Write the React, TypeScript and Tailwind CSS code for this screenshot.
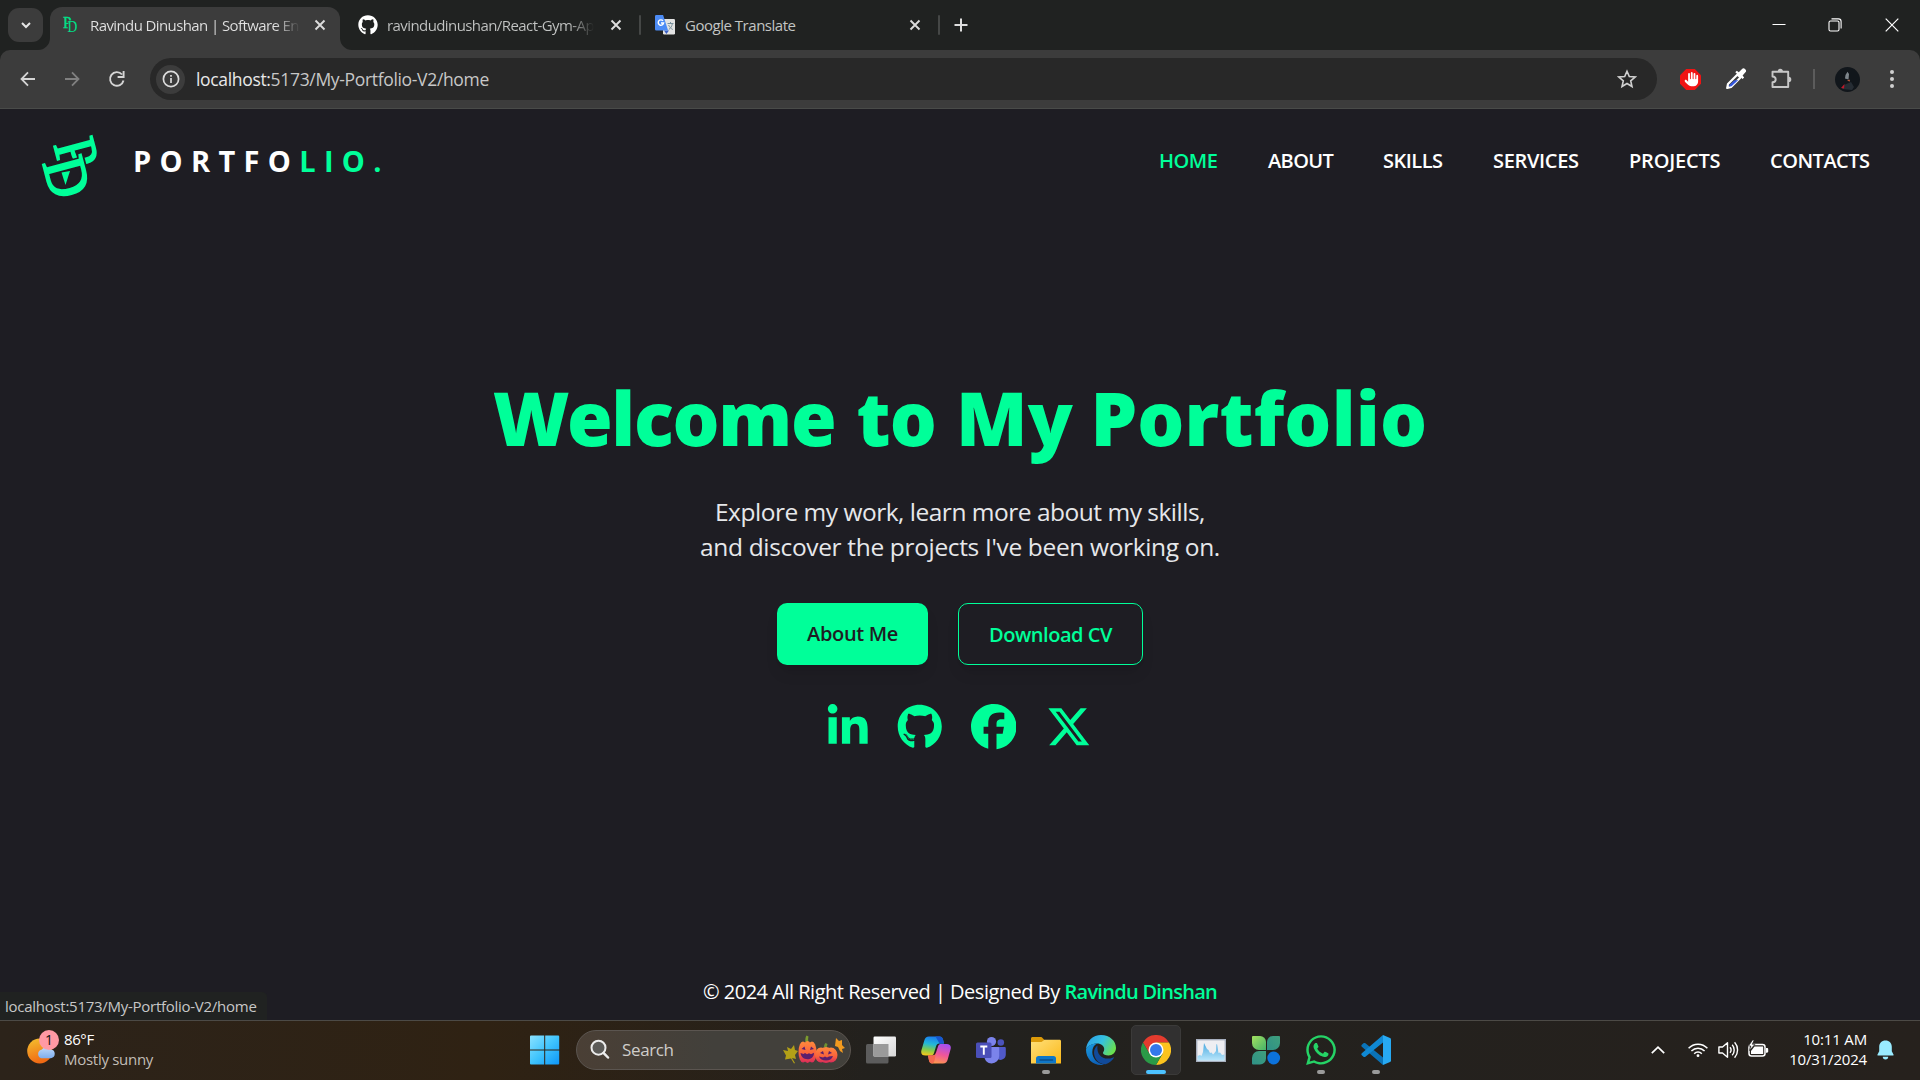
import React from "react";
import { FaGithub, FaLinkedinIn, FaFacebook, FaXTwitter, FaWhatsapp, FaHand } from "react-icons/fa6";

const GREEN = "#00ff99";

/* ---------- shared glyphs ---------- */

function CloseGlyph() {
  return (
    <svg width="12" height="12" viewBox="0 0 12 12" className="shrink-0">
      <path d="M1.5 1.5l9 9M10.5 1.5l-9 9" stroke="#dcdcdc" strokeWidth="1.9" fill="none" />
    </svg>
  );
}

function PdFavicon() {
  return (
    <svg width="18" height="18" viewBox="0 0 18 18" className="shrink-0 overflow-visible">
      <g fill="#00e08a" fontFamily="Liberation Serif, serif" fontSize="17">
        <text transform="translate(0 12) scale(0.9 1)" stroke="#00e08a" strokeWidth="0.4">P</text>
        <text transform="translate(4.6 16) scale(0.8 1)" stroke="#3c3c3c" strokeWidth="1" paintOrder="stroke">D</text>
      </g>
    </svg>
  );
}

function TranslateIcon() {
  return (
    <svg width="20" height="20" viewBox="0 0 20 20" className="shrink-0">
      <rect x="8" y="4" width="12" height="15.5" rx="1.2" fill="#e3e3e3" />
      <path d="M12.5 8.5h6M15.5 7v1.5M17.4 8.5c-.5 3-2 5-3.600 6M13.6 10c1 2.300 2.300 3.500 4.200 4.500" stroke="#78909c" strokeWidth="1" fill="none" />
      <path d="M9 15.500h5l-2.600 3.600z" fill="#3b5fc4" />
      <path d="M1.300 0h6.800l5 15.500H1.300A1.300 1.300 0 0 1 0 14.200V1.300A1.300 1.300 0 0 1 1.300 0z" fill="#4c8bf5" />
      <path d="M8 5.800A2.700 2.700 0 1 0 8.600 8H6" stroke="#fff" strokeWidth="1.400" fill="none" />
    </svg>
  );
}

function LogoMark() {
  return (
    <svg width="100" height="90" viewBox="0 0 100 90" className="block overflow-visible">
      <g fill={GREEN} fontFamily="Liberation Serif, serif" fontSize="60">
        <text transform="translate(23.500 23.500) rotate(75) scale(0.860 1)" stroke={GREEN} strokeWidth="1.700">P</text>
        <text transform="translate(12.500 42) rotate(75) scale(0.920 1)" stroke="#1e1d23" strokeWidth="5.500" paintOrder="stroke">D</text>
        <text transform="translate(12.500 42) rotate(75) scale(0.920 1)" stroke={GREEN} strokeWidth="1.900">D</text>
        <path d="M31.500 51.500l8.500-1.500-4.500 14z" />
      </g>
    </svg>
  );
}

/* ---------- browser chrome ---------- */

function TabStrip() {
  return (
    <div className="flex h-[50px] items-stretch">
      <div className="flex w-[50px] items-center pl-2">
        <div className="flex h-[34px] w-[35px] items-center justify-center rounded-[11px] bg-[#3c3c3c]">
          <svg width="12" height="12" viewBox="0 0 12 12">
            <path d="M2 4l4 4 4-4" stroke="#e6e6e6" strokeWidth="2" fill="none" />
          </svg>
        </div>
      </div>

      <div className="relative mt-[7px] flex w-[290px] items-center rounded-t-[12px] bg-[#3c3c3c] pl-[13px] pb-[7px]">
        <svg width="12" height="12" viewBox="0 0 12 12" className="absolute bottom-0 -left-3">
          <path d="M12 0v12H0A12 12 0 0 0 12 0z" fill="#3c3c3c" />
        </svg>
        <svg width="12" height="12" viewBox="0 0 12 12" className="absolute -right-3 bottom-0">
          <path d="M0 0v12h12A12 12 0 0 1 0 0z" fill="#3c3c3c" />
        </svg>
        <PdFavicon />
        <div className="ml-[9px] w-[210px] overflow-hidden bg-linear-to-r from-[#e3e3e3] from-88% to-[#55555500] bg-clip-text text-[15px] tracking-[-0.6px] whitespace-nowrap text-transparent">
          Ravindu Dinushan | Software En
        </div>
        <div className="ml-[14px] flex"><CloseGlyph /></div>
      </div>

      <div className="flex w-[301px] items-center pl-[18px]">
        <FaGithub size={20} color="#ffffff" className="shrink-0" />
        <div className="ml-[9px] w-[209px] overflow-hidden bg-linear-to-r from-[#c3c5c4] from-88% to-[#20222100] bg-clip-text text-[15px] tracking-[-0.580px] whitespace-nowrap text-transparent">
          ravindudinushan/React-Gym-Ap
        </div>
        <div className="ml-[16px] flex"><CloseGlyph /></div>
        <div className="ml-[17px] h-5 w-[2px] shrink-0 rounded bg-[#454746]" />
      </div>

      <div className="flex w-[300px] items-center pl-[14px]">
        <TranslateIcon />
        <div className="ml-[10px] w-[224px] text-[15px] tracking-[-0.480px] text-[#c3c5c4]">Google Translate</div>
        <div className="flex"><CloseGlyph /></div>
        <div className="ml-[17px] h-5 w-[2px] shrink-0 rounded bg-[#454746]" />
      </div>

      <div className="flex flex-1 items-center pl-[13px]">
        <svg width="14" height="14" viewBox="0 0 14 14">
          <path d="M7 .5v13M.5 7h13" stroke="#dedede" strokeWidth="2" />
        </svg>
      </div>

      <div className="flex items-center gap-[43px] pr-[21px]">
        <svg width="14" height="14" viewBox="0 0 14 14" className="-mr-px">
          <path d="M.5 6.500h13" stroke="#fff" strokeWidth="1" />
        </svg>
        <svg width="14" height="14" viewBox="0 0 14 14" fill="none" stroke="#fff" strokeWidth="1.100">
          <rect x="1" y="3" width="10" height="10" rx="1.500" />
          <path d="M3.500 .900h7a2.600 2.600 0 0 1 2.600 2.600v7" />
        </svg>
        <svg width="14" height="14" viewBox="0 0 14 14">
          <path d="M.700 .700l12.600 12.600M13.300 .700L.700 13.300" stroke="#fff" strokeWidth="1.200" />
        </svg>
      </div>
    </div>
  );
}

function Toolbar() {
  return (
    <div className="flex h-[59px] items-center rounded-t-[10px] border-b border-[#494b49] bg-[#3c3c3c]">
      <div className="flex w-[150px] items-center pl-[20px]">
        <svg width="16" height="16" viewBox="0 0 16 16" fill="none" stroke="#d5d5d5" strokeWidth="1.800">
          <path d="M15 8H2M8 1.300L1.500 8 8 14.700" />
        </svg>
        <svg width="16" height="16" viewBox="0 0 16 16" fill="none" stroke="#808080" strokeWidth="1.800" className="ml-[28px]">
          <path d="M1 8h13M8 1.300L14.500 8 8 14.700" />
        </svg>
        <svg width="18" height="18" viewBox="0 0 18 18" fill="none" stroke="#d5d5d5" strokeWidth="1.900" className="ml-[28px]">
          <path d="M15.500 10.500A6.800 6.800 0 1 1 14 4.500M15.600 1v6H9.600" />
        </svg>
      </div>

      <div className="flex h-[42px] flex-1 items-center rounded-full bg-[#282828] pr-5 pl-[6px]">
        <div className="flex h-[29px] w-[29px] items-center justify-center rounded-full bg-[#3c3c3c]">
          <svg width="18" height="18" viewBox="0 0 18 18" fill="none" stroke="#dcdcdc">
            <circle cx="9" cy="9" r="7.600" strokeWidth="1.700" />
            <path d="M9 8v5M9 4.900v1.800" strokeWidth="1.700" />
          </svg>
        </div>
        <div className="ml-[11px] flex-1 pt-px text-[17.5px] tracking-[-0.330px] text-[#c7c7c7]">
          <span className="text-[#e8e8e8]">localhost:</span>5173/My-Portfolio-V2/home
        </div>
        <svg width="20" height="20" viewBox="0 0 20 20" fill="none" stroke="#d0d0d0" strokeWidth="1.600">
          <path d="M10 2.200l2.300 5.300 5.800.500-4.400 3.800 1.300 5.700L10 14.500l-5 3 1.300-5.700L1.900 8l5.800-.500z" />
        </svg>
      </div>

      <div className="flex w-[263px] items-center pl-[23px]">
        <svg width="21" height="21" viewBox="0 0 21 21">
          <path d="M6.200 0h8.600L21 6.200v8.600L14.800 21H6.200L0 14.800V6.200z" fill="#f01414" />
          <FaHand x={4.5} y={3} size={14.5} color="#fff" />
        </svg>
        <svg width="22" height="22" viewBox="0 0 22 22" className="ml-[24px]">
          <path d="M12.500 6.500l3 3L6 19l-3.800 1L3 16z" fill="#3c3c3c" stroke="#fff" strokeWidth="2.200" strokeLinejoin="round" />
          <path d="M9 12.500l4.300-.5L6.500 18.300l-2.500.3.400-1.700z" fill="#3457e0" />
          <path d="M10.300 4.300l1.500-1.500 2 1.400 3-3a2.300 2.300 0 0 1 3.400 0 2.300 2.300 0 0 1 0 3.400l-2.600 2.800 1.500 2.100-1.500 1.500z" fill="#fff" />
        </svg>
        <svg width="22" height="22" viewBox="0 0 22 22" className="ml-[23px]">
          <path d="M2.500 3.700h15.700v15.300H2.500v-4.700c2.300-.2 3.200-1.300 3.200-2.900s-.9-2.700-3.200-2.900z" fill="none" stroke="#c7c7c7" strokeWidth="1.900" strokeLinejoin="round" />
          <path d="M7.700 3.300a2.600 2.600 0 0 1 5.200 0zM18.700 8.800a2.600 2.600 0 0 1 0 5.200z" fill="#c7c7c7" />
        </svg>
        <div className="ml-[21px] h-5 w-[2px] bg-[#5c5c5c]" />
        <svg width="25" height="25" viewBox="0 0 25 25" className="ml-[20px]">
          <circle cx="12.500" cy="12.500" r="12.500" fill="#11161b" />
          <path d="M10.500 8l2-3.300L14 7l-.500 5.500-3.500-1z" fill="#7e868c" />
          <path d="M12 13l3-.300-.500 2z" fill="#c05a3a" />
          <path d="M7 22l2-4 7-3 3 5-2 3z" fill="#262d34" />
          <path d="M6 21l3.500-4-.500 4.500z" fill="#c0182a" />
        </svg>
        <svg width="4" height="20" viewBox="0 0 4 20" fill="#cfcfcf" className="ml-[30px]">
          <circle cx="2" cy="3" r="2" />
          <circle cx="2" cy="10" r="2" />
          <circle cx="2" cy="17" r="2" />
        </svg>
      </div>
    </div>
  );
}

/* ---------- portfolio page ---------- */

function SiteHeader() {
  return (
    <header className="flex h-[103px] items-center text-white">
      <div className="mt-[11px] h-[90px] w-[104px] pl-[30px]">
        <LogoMark />
      </div>
      <div className="ml-[29px] text-[29px] leading-none font-bold tracking-[8.330px]">
        PORTFO<span className="text-[#00ff99]">LIO.</span>
      </div>
      <nav className="ml-auto flex pr-[50px] text-[20px] font-semibold">
        <a className="w-[109px] tracking-[-0.450px] text-[#00ff99]">HOME</a>
        <a className="w-[115px] tracking-[-0.600px]">ABOUT</a>
        <a className="w-[110px] tracking-[-0.500px]">SKILLS</a>
        <a className="w-[136px] tracking-[-0.330px]">SERVICES</a>
        <a className="w-[141px] tracking-[-0.200px]">PROJECTS</a>
        <a className="w-[100px] tracking-[-0.500px]">CONTACTS</a>
      </nav>
    </header>
  );
}

function Hero() {
  return (
    <main className="flex flex-1 flex-col items-center pt-[162px]">
      <h1 className="flex h-[88px] text-[74px] leading-[88px] font-black whitespace-nowrap text-[#00ff99] font-['Noto_Sans',sans-serif]">
        <span className="tracking-[-1.300px]">Welcome</span>
        <span className="ml-[21px] tracking-[-0.900px]">to</span>
        <span className="ml-[20px] tracking-[0.400px]">My</span>
        <span className="ml-[17px] tracking-[0.150px]">Portfolio</span>
      </h1>
      <p className="mt-[32px] text-center text-[24.5px] leading-[35px] text-[#e6e7ea]">
        <span className="block tracking-[-0.490px]">Explore my work, learn more about my skills,</span>
        <span className="block tracking-[-0.340px]">and discover the projects I've been working on.</span>
      </p>
      <div className="mt-[39px] flex gap-[30px] text-[20px] font-semibold">
        <div className="flex h-[62px] w-[151px] items-center justify-center rounded-[10px] bg-[#00ff99] tracking-[-0.350px] text-[#1e1d23] shadow-lg">
          About Me
        </div>
        <div className="flex h-[62px] w-[185px] items-center justify-center rounded-[10px] border border-[#00ff99] pt-[2px] tracking-[-0.480px] text-[#00ff99] shadow-lg">
          Download CV
        </div>
      </div>
      <div className="mt-[39px] mr-[4px] flex text-[#00ff99]">
        <FaLinkedinIn size={45.5} />
        <FaGithub size={45.5} className="ml-[26.500px]" />
        <FaFacebook size={45.5} className="ml-[28.500px]" />
        <FaXTwitter size={45.5} className="ml-[29.500px]" />
      </div>
    </main>
  );
}

function SiteFooter() {
  return (
    <footer className="relative h-[59px]">
      <p className="text-center text-[20px] leading-[62px] text-white">
        <span className="tracking-[-0.490px]">© 2024 All Right Reserved | Designed By </span>
        <span className="font-semibold tracking-[-0.720px] text-[#00ff99]">Ravindu Dinshan</span>
      </p>
      <div className="absolute bottom-0 left-0 flex h-[28px] w-[267px] items-center rounded-tr-[5px] bg-[#202221] pl-[5px] text-[15px] tracking-[-0.270px] whitespace-nowrap text-[#c7c7c7]">
        localhost:5173/My-Portfolio-V2/home
      </div>
    </footer>
  );
}

/* ---------- taskbar ---------- */

function Weather() {
  return (
    <div className="flex w-[530px] items-center pl-[27px]">
      <svg width="33" height="36" viewBox="0 0 33 36" className="-mt-[6px]">
        <defs>
          <linearGradient id="sun" x1="0" y1="0" x2="0.300" y2="1">
            <stop offset="0" stopColor="#f4c22f" />
            <stop offset="1" stopColor="#f06a14" />
          </linearGradient>
          <linearGradient id="cloud" x1="0" y1="0" x2="0" y2="1">
            <stop offset="0" stopColor="#bcd8fb" />
            <stop offset="1" stopColor="#7faeee" />
          </linearGradient>
        </defs>
        <circle cx="12.700" cy="22" r="12.500" fill="url(#sun)" />
        <path d="M14.500 29.200a4.300 4.300 0 0 1 0-8.400 6 6 0 0 1 9.500-.3 4.400 4.400 0 0 1 0 8.700z" fill="url(#cloud)" />
        <circle cx="22" cy="11" r="10" fill="#ff99a4" />
        <text x="22" y="16" textAnchor="middle" fontFamily="Open Sans" fontSize="14" fill="#111">1</text>
      </svg>
      <div className="-mt-[3px] ml-[4px] text-[15px] leading-5">
        <div className="tracking-[-0.400px] text-white">86°F</div>
        <div className="tracking-[-0.280px] text-[#c2bdb6]">Mostly sunny</div>
      </div>
    </div>
  );
}

function StartIcon() {
  return (
    <svg width="30" height="30" viewBox="0 0 30 30">
      <defs>
        <linearGradient id="win" x1="0" y1="0" x2="1" y2="1">
          <stop offset="0" stopColor="#8be2ff" />
          <stop offset="0.500" stopColor="#40c4fd" />
          <stop offset="1" stopColor="#0d96f8" />
        </linearGradient>
      </defs>
      <path d="M1 .500h13.200v14H0v-13a1 1 0 0 1 1-1zM15.200 .500H28.200a1 1 0 0 1 1 1v13h-14zM0 15.500h14.200v14H1a1 1 0 0 1-1-1zM15.200 15.500h14v13a1 1 0 0 1-1 1h-13z" fill="url(#win)" />
    </svg>
  );
}

function Pumpkins() {
  return (
    <svg width="62" height="30" viewBox="0 0 62 30">
      <defs>
        <linearGradient id="pk" x1="0" y1="0" x2="0" y2="1">
          <stop offset="0" stopColor="#ff8a3d" />
          <stop offset="0.600" stopColor="#f9603c" />
          <stop offset="1" stopColor="#d92a5b" />
        </linearGradient>
      </defs>
      <path d="M0 15l5 1-1-4 4 2 3-4 1 5 3 1-3 4 1 4-4-1 3 5-1 .500-3-5-6 1 1-4z" fill="#b3a017" />
      <path d="M53 3l3 3 3-1v5l3 3-3 1 1 4-3-2-2-4-3-1z" fill="#f39a1f" />
      <path d="M22.500 7c-.5-2 0-5 1-6.500l2 1c-.5 2-.5 3.500 0 5.500z" fill="#7d9c2e" />
      <ellipse cx="20" cy="17" rx="4.500" ry="10.500" fill="url(#pk)" />
      <ellipse cx="29" cy="17" rx="4.500" ry="10.500" fill="url(#pk)" />
      <ellipse cx="24.500" cy="17" rx="5" ry="11" fill="url(#pk)" />
      <path d="M18.500 14l3-2.500 1 3.500zM27 15l1-3.500 3 2.500zM17.500 18l3 1 1.500-1 2 1.200 2-1 2 1 3-1.500c0 4-2.500 6.500-6.500 6.500s-6.500-2.500-7-6.200z" fill="#5b1f6d" />
      <path d="M41 12c0-2 .5-3 1.500-4l2 1-1 4z" fill="#6f9130" />
      <ellipse cx="38" cy="20" rx="6" ry="7.500" fill="url(#pk)" />
      <ellipse cx="48" cy="20" rx="6.500" ry="7.500" fill="url(#pk)" />
      <ellipse cx="43" cy="20" rx="6.500" ry="8" fill="url(#pk)" />
      <path d="M37 18l3-2 1 3.500zM45 19.500l1-3.500 3 2zM36 21.500l4 1 2-1 2 1 2-1 4-.500c-1 3-3.500 4.500-7 4.500s-6-1.500-7-4z" fill="#5b1f6d" />
    </svg>
  );
}

function TaskViewIcon() {
  return (
    <svg width="30" height="30" viewBox="0 0 30 30">
      <defs>
        <linearGradient id="tv" x1="0" y1="0" x2="1" y2="1">
          <stop offset="0" stopColor="#fff" />
          <stop offset="1" stopColor="#d6d6d6" />
        </linearGradient>
      </defs>
      <rect x="0" y="9" width="22.500" height="19.500" rx="1.500" fill="#5c5c5c" />
      <rect x="7.500" y="1.500" width="22.500" height="20" rx="1.200" fill="url(#tv)" />
      <path d="M7.500 9h15v12.500h-15z" fill="#9a9a9a" />
    </svg>
  );
}

function CopilotIcon() {
  return (
    <svg width="30" height="30" viewBox="0 0 30 30">
      <defs>
        <linearGradient id="cp1" x1="0.500" y1="0" x2="0.300" y2="1">
          <stop offset="0" stopColor="#1a7cf0" />
          <stop offset="0.400" stopColor="#22b8d8" />
          <stop offset="0.700" stopColor="#7ecb4f" />
          <stop offset="1" stopColor="#f5c81d" />
        </linearGradient>
        <linearGradient id="cp2" x1="0.600" y1="0" x2="0.300" y2="1">
          <stop offset="0" stopColor="#a64ff0" />
          <stop offset="0.500" stopColor="#f0569a" />
          <stop offset="1" stopColor="#ff9a4a" />
        </linearGradient>
      </defs>
      <path d="M8 1.500h10.500c2 0 3 1 3.500 3l1 4h-4.500c-2 0-3 1-3.500 3l-2 6.500c-.6 2-1.500 2.500-3.500 2.500H4.500C1 20.500-.5 18.500.500 15l2.800-9.500C4 3 5.500 1.500 8 1.500z" fill="url(#cp1)" />
      <path d="M14.500 1.500h4c2 0 3 1 3.500 3l1 4h-4.500z" fill="#1757d0" />
      <path d="M22 28.500H11.500c-2 0-3-1-3.500-3l-1-5h4.500c2 0 3-1 3.500-3l2-6c.6-2 1.500-2.500 3.500-2.500h5c3.500 0 5 2 4 5.500L26.700 24.500c-.7 2.500-2.200 4-4.700 4z" fill="url(#cp2)" />
      <path d="M7 20.500h4.500c2 0 3-1 3.500-3l-1.500 8c-.5 2-1 3-2.500 3-1.700 0-2.500-1-3-3z" fill="#f4694f" />
    </svg>
  );
}

function TeamsIcon() {
  return (
    <svg width="30" height="30" viewBox="0 0 30 30">
      <circle cx="24.800" cy="7.500" r="3.300" fill="#4b53bc" />
      <circle cx="15.500" cy="6.500" r="4.600" fill="#7b83eb" />
      <path d="M21 12h7.500c.8 0 1.300.500 1.300 1.300v6.200a5.300 5.300 0 0 1-8.800 4z" fill="#5059c9" />
      <path d="M10 12h12c.7 0 1.200.500 1.200 1.200V21a7.500 7.500 0 0 1-7.600 7.500c-4 0-7-3-7.200-7z" fill="#7b83eb" />
      <rect x="0" y="7.500" width="15.500" height="15.500" rx="1.500" fill="#4a4fb8" />
      <path d="M4.300 11.500h7M7.800 11.500v8.300" stroke="#fff" strokeWidth="1.900" />
    </svg>
  );
}

function ExplorerIcon() {
  return (
    <svg width="30" height="30" viewBox="0 0 30 30">
      <defs>
        <linearGradient id="fo" x1="0" y1="0" x2="1" y2="1">
          <stop offset="0" stopColor="#ffe07a" />
          <stop offset="1" stopColor="#fbb818" />
        </linearGradient>
      </defs>
      <path d="M0 3.500C0 2.700.700 2 1.500 2h8c1 0 1.500.300 2 1L13.500 5H28c1 0 2 .500 2 2v5H0z" fill="#dc9a09" />
      <path d="M0 7h10.500l3-2.200H28.500c.8 0 1.500.700 1.500 1.500v22.200H0z" fill="url(#fo)" />
      <path d="M5 28.500v-5c0-1.500 1-2.500 2.500-2.500h15c1.500 0 2.500 1 2.500 2.500v5z" fill="#0f77c8" />
      <path d="M9 25h12.500" stroke="#0b4f8c" strokeWidth="1.500" strokeLinecap="round" />
    </svg>
  );
}

function EdgeIcon() {
  return (
    <svg width="30" height="30" viewBox="0 0 30 30">
      <defs>
        <linearGradient id="ed1" x1="0" y1="0.200" x2="1" y2="0.600">
          <stop offset="0" stopColor="#2b9fe8" />
          <stop offset="0.500" stopColor="#35c1e0" />
          <stop offset="1" stopColor="#6be04c" />
        </linearGradient>
        <linearGradient id="ed2" x1="0" y1="0" x2="0.500" y2="1">
          <stop offset="0" stopColor="#1b9de2" />
          <stop offset="1" stopColor="#0d60b8" />
        </linearGradient>
      </defs>
      <path d="M0 14.500C.500 6 7 0 15 0c9 0 15 6 15 13 0 4.500-3.500 7.500-7.500 7.500-3 0-5.500-1-5.500-2.500 0-1 1.200-1.500 1.200-4 0-3-3-5.500-7-5.500C6 8.500 1.500 11 0 14.500z" fill="url(#ed1)" />
      <path d="M0 14.500c1.500-3.500 5.500-6 11-6-3 1.500-4.700 4.500-4.700 8.500 0 6 4.500 11.500 11.700 12.700-1 .3-2 .3-3 .3C6.500 30 0 23.500 0 14.500z" fill="url(#ed2)" />
      <path d="M11.500 10.500c-2 1.500-3.500 4-3.500 7 0 6.500 5 12 11.500 11.800 3.500-1.300 6.500-3.500 8.300-6.300.3-.6-.2-.9-.7-.6-8 3.600-17-.9-15.600-11.900z" fill="#114a9a" />
    </svg>
  );
}

function ChromeIcon() {
  return (
    <svg width="30" height="30" viewBox="0 0 30 30">
      <path d="M2 7.500A15 15 0 0 1 28 7.500H15L8.500 18.700z" fill="#e33b2e" />
      <path d="M28 7.500A15 15 0 0 1 15 30l6.500-11.200L15 7.500z" fill="#fcc31e" />
      <path d="M15 30A15 15 0 0 1 2 7.500l6.500 11.300 13 0z" fill="#2a9a47" />
      <circle cx="15" cy="15" r="7.500" fill="#fff" />
      <circle cx="15" cy="15" r="6" fill="#3478ea" />
    </svg>
  );
}

function MonitorIcon() {
  return (
    <svg width="30" height="30" viewBox="0 0 30 30">
      <defs>
        <linearGradient id="mo" x1="0" y1="0" x2="0" y2="1">
          <stop offset="0" stopColor="#4aa9e0" />
          <stop offset="1" stopColor="#b9e6fb" />
        </linearGradient>
      </defs>
      <rect x="0.700" y="4.700" width="28.600" height="21.600" fill="#eeeef2" stroke="#a7afbe" strokeWidth="1.400" />
      <path d="M1.500 21l2.500-1 1.500 1 1.500-4 1-9 3 6 1.500 1 1.500 3 1.500-.5 1.500 2 1.500-1.500 1.500-2 .5-6.500L21 9l1.500 9 1.500-.500 2 2.500 2.500-.5v6h-27z" fill="url(#mo)" />
    </svg>
  );
}

function CloverIcon() {
  return (
    <svg width="30" height="30" viewBox="0 0 30 30">
      <defs>
        <linearGradient id="cl1" x1="0" y1="0" x2="1" y2="1">
          <stop offset="0" stopColor="#a4e05f" />
          <stop offset="1" stopColor="#45b36a" />
        </linearGradient>
        <linearGradient id="cl2" x1="1" y1="0" x2="0" y2="1">
          <stop offset="0" stopColor="#3f9f7c" />
          <stop offset="1" stopColor="#2f9187" />
        </linearGradient>
      </defs>
      <path d="M1 2a1 1 0 0 1 1-1h7a6 6 0 0 1 6 6v8H8a7 7 0 0 1-7-7z" fill="url(#cl1)" />
      <path d="M29 2a1 1 0 0 0-1-1h-6a6 6 0 0 0-6 6v8h6a7 7 0 0 0 7-7z" fill="url(#cl2)" />
      <path d="M1 28.500a1 1 0 0 0 1 1h7a6 6 0 0 0 6-6V16H8a7 7 0 0 0-7 7z" fill="url(#cl2)" />
      <circle cx="22.700" cy="23" r="6.400" fill="#0c72dc" />
    </svg>
  );
}

function CodeIcon() {
  return (
    <svg width="30" height="30" viewBox="0 0 30 30">
      <path d="M.800 9.800L2.500 8.300c.6-.5 1.300-.5 1.900 0L22 22.500V30L.800 11.700c-.6-.6-.6-1.300 0-1.900z" fill="#0a73b8" />
      <path d="M.800 20.200l1.700 1.500c.6.500 1.300.5 1.900 0L22 7.500V0L.800 18.300c-.6.600-.6 1.300 0 1.900z" fill="#1089d4" />
      <path d="M22 0l7 3c.600.300 1 .800 1 1.500v21c0 .700-.4 1.200-1 1.500l-7 3z" fill="#27a9f2" />
    </svg>
  );
}

function TaskItem({ children, dot, active }: { children: React.ReactNode; dot?: boolean; active?: boolean }) {
  return (
    <div className="flex w-[55px] justify-center">
      <div
        className={
          active
            ? "flex h-[50px] w-[50px] flex-col items-center rounded-[5px] border border-[#3b3a39] bg-[#313030] pt-[9px]"
            : "flex h-[50px] w-[50px] flex-col items-center pt-[10px]"
        }
      >
        {children}
        {active && <div className="mt-[5px] h-[4px] w-[20px] rounded-full bg-[#4cc2ff]" />}
        {dot && <div className="mt-[5px] h-[4px] w-[8px] rounded-full bg-[#9a9a9a]" />}
      </div>
    </div>
  );
}

function Tray() {
  return (
    <div className="ml-auto flex items-center pr-[26px]">
      <svg width="14" height="8" viewBox="0 0 14 8">
        <path d="M.800 7.200L7 1.200l6.200 6" stroke="#fff" strokeWidth="1.700" fill="none" />
      </svg>
      <svg width="20" height="16" viewBox="0 0 20 16" fill="none" stroke="#fff" strokeWidth="1.500" className="ml-[23px]">
        <path d="M.600 6.300a13 13 0 0 1 18.800 0M3.400 9.100a9.200 9.200 0 0 1 13.200 0M6.200 11.700a5.300 5.300 0 0 1 7.600 0" />
        <circle cx="10" cy="13.700" r="1.400" fill="#fff" stroke="none" />
      </svg>
      <svg width="21" height="18" viewBox="0 0 21 18" fill="none" stroke="#fff" strokeWidth="1.400" className="ml-[10px]">
        <path d="M.900 6h3.600L9.500 1.800v14.400L4.500 12H.900z" strokeLinejoin="round" />
        <path d="M12 6.200a4.500 4.500 0 0 1 0 5.600M14.200 3.700a8 8 0 0 1 0 10.600M16.600 1.300a11.500 11.500 0 0 1 0 15.400" />
      </svg>
      <svg width="21" height="18" viewBox="0 0 21 18" className="-mt-[3px] ml-[9px]">
        <rect x="1" y="4.500" width="16" height="11.500" rx="2.500" fill="none" stroke="#fff" strokeWidth="1.500" />
        <path d="M6.500 6.500h8.700v7.500H3V11z" fill="#fff" />
        <path d="M18 8h1c.8 0 1.200.500 1.200 1.200v2.300c0 .700-.4 1.200-1.200 1.200h-1z" fill="#fff" />
        <path d="M4.500 0L.500 6h2.300L1.500 10.500l5.500-6.200H4.300L6.200 0z" fill="#fff" stroke="#22211e" strokeWidth="0.700" />
      </svg>
      <div className="-mt-[3px] ml-[18px] w-[80px] text-right text-[15px] leading-5 whitespace-nowrap text-white">
        <div className="tracking-[-0.160px]">10:11 AM</div>
        <div className="tracking-[-0.180px]">10/31/2024</div>
      </div>
      <svg width="17" height="20" viewBox="0 0 17 20" className="ml-[10px]">
        <path d="M8.500.500c3.800 0 6.300 2.700 6.300 6.300v4.500l1.800 3.400c.2.500 0 .800-.5.800H.900c-.5 0-.7-.3-.5-.8l1.800-3.400V6.800C2.200 3.200 4.700.500 8.500.500zM5.800 16.800h5.400a2.700 2.700 0 0 1-5.400 0z" fill="#99ebff" />
      </svg>
    </div>
  );
}

function Taskbar() {
  return (
    <div className="flex h-[60px] items-stretch border-t border-[#4c4a46] bg-linear-to-r from-[#2c2117] via-[#22211e] via-50% to-[#26211d]">
      <div className="flex w-full items-center bg-linear-to-r from-[#2c231a] from-0% via-[#2f2213] via-25% to-transparent to-45% pb-px">
        <Weather />
        <div className="flex w-[46px] items-center"><StartIcon /></div>
        <div className="flex h-10 w-[275px] items-center rounded-full border border-[#5b5550] bg-linear-to-r from-[#4a3f35] to-[#42403b] to-50% pl-[13px]">
          <svg width="20" height="20" viewBox="0 0 20 20" fill="none" stroke="#ececec" strokeWidth="2" className="-mt-[2px]">
            <circle cx="8.500" cy="8.700" r="7" fill="#5c5b58" />
            <path d="M13.500 13.800l4.500 4.700" strokeWidth="2.500" strokeLinecap="round" />
          </svg>
          <span className="ml-[12px] flex-1 text-[17px] tracking-[-0.370px] text-[#cfcdca]">Search</span>
          <div className="mr-[5px]"><Pumpkins /></div>
        </div>
        <div className="ml-[2.500px] flex">
          <TaskItem><TaskViewIcon /></TaskItem>
          <TaskItem><CopilotIcon /></TaskItem>
          <TaskItem><TeamsIcon /></TaskItem>
          <TaskItem dot><ExplorerIcon /></TaskItem>
          <TaskItem><EdgeIcon /></TaskItem>
          <TaskItem active><ChromeIcon /></TaskItem>
          <TaskItem><MonitorIcon /></TaskItem>
          <TaskItem><CloverIcon /></TaskItem>
          <TaskItem dot><FaWhatsapp size={34} color="#25d366" className="-my-[2px] shrink-0" /></TaskItem>
          <TaskItem dot><CodeIcon /></TaskItem>
        </div>
        <Tray />
      </div>
    </div>
  );
}

export default function App() {
  return (
    <div className="flex h-[1080px] w-[1920px] flex-col overflow-hidden bg-[#202221] font-['Open_Sans','Noto_Sans',sans-serif]">
      <TabStrip />
      <Toolbar />
      <div className="flex flex-1 flex-col bg-[#1e1d23]">
        <SiteHeader />
        <Hero />
        <SiteFooter />
      </div>
      <Taskbar />
    </div>
  );
}
